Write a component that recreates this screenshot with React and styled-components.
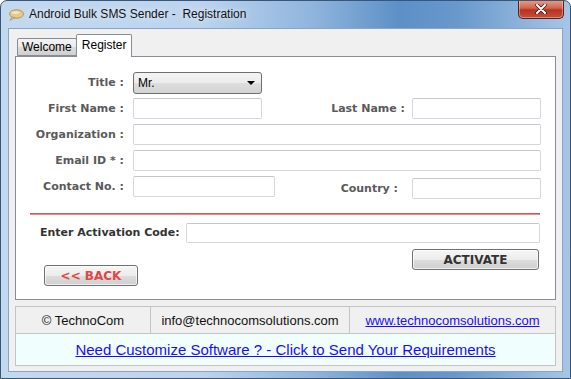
import React from "react";
import styled, { createGlobalStyle } from "styled-components";

const GlobalStyle = createGlobalStyle`
  * { box-sizing: border-box; }
  html, body { margin: 0; padding: 0; background: #ffffff; }
  body { font-family: "Liberation Sans", Arial, sans-serif; }
`;

const Window = styled.div`
  width: 571px;
  height: 379px;
  display: flex;
  flex-direction: column;
  border: 1px solid #3b5577;
  border-radius: 7px 7px 0 0;
  overflow: hidden;
  background: linear-gradient(
    90deg,
    #c3d9f0 0%,
    #bcd4ee 35%,
    #8fb4dd 55%,
    #5d90c7 70%,
    #6898cc 80%,
    #a7c6e6 100%
  );
`;

const TitleBar = styled.div`
  height: 27px;
  flex: 0 0 27px;
  display: flex;
  align-items: flex-start;
  padding-left: 7px;
`;

const TitleIcon = styled.svg`
  margin-top: 7px;
  width: 16px;
  height: 14px;
`;

const TitleText = styled.div`
  margin-top: 6px;
  margin-left: 5px;
  font-family: "Liberation Sans", Arial, sans-serif;
  font-size: 12px;
  color: #111;
  white-space: pre;
  text-shadow: 0 0 6px rgba(255, 255, 255, 0.9);
  flex: 1;
`;

const CloseButton = styled.div`
  width: 46px;
  height: 19px;
  margin-right: 6px;
  margin-top: -1px;
  border: 1px solid #5b1d1d;
  border-top: none;
  border-radius: 0 0 5px 5px;
  background: linear-gradient(180deg, #e8a08a 0%, #d0644f 45%, #b8321e 55%, #c4503a 100%);
  display: flex;
  align-items: center;
  justify-content: center;
  box-shadow: inset 0 0 0 1px rgba(255, 255, 255, 0.35);
`;

const Client = styled.div`
  flex: 1;
  margin: 0 7px 6px 7px;
  border: 1px solid #8aa4c2;
  background: #f0f0f0;
  padding: 6px 6px 0 6px;
  display: flex;
  flex-direction: column;
`;

const TabStrip = styled.div`
  display: flex;
  align-items: flex-end;
  height: 21px;
  padding-left: 2px;
  position: relative;
  z-index: 1;
`;

const Tab = styled.div`
  height: ${p => (p.active ? "23px" : "18px")};
  margin-bottom: ${p => (p.active ? "-1px" : "0")};
  padding: 0 ${p => (p.active ? "5px" : "4px")};
  margin-left: ${p => (p.active ? "-1px" : "0")};
  border: 1px solid #898c95;
  border-bottom: ${p => (p.active ? "none" : "1px solid #898c95")};
  border-radius: 2px 2px 0 0;
  background: ${p =>
    p.active ? "#ffffff" : "linear-gradient(180deg, #f3f3f3 0%, #ebebeb 50%, #dddddd 51%, #cfcfcf 100%)"};
  font-size: 12px;
  color: #000;
  display: flex;
  align-items: ${p => (p.active ? "flex-start" : "center")};
  padding-top: ${p => (p.active ? "3px" : "0")};
`;

const Panel = styled.div`
  height: 244px;
  border: 1px solid #898c95;
  background: #ffffff;
  padding: 15px 15px 0 0;
  display: flex;
  flex-direction: column;
`;

const FormGrid = styled.div`
  display: grid;
  grid-template-columns: 117px 129px 150px 129px;
  grid-auto-rows: 22px;
  row-gap: 4px;
  align-items: start;
`;

const Label = styled.div`
  font-family: "DejaVu Sans", Verdana, sans-serif;
  font-weight: bold;
  font-size: 11px;
  color: #5a5a5a;
  text-align: right;
  padding-right: ${p => p.pr || 9}px;
  margin-top: ${p => (p.drop ? 2 : 0)}px;
  line-height: 22px;
  white-space: nowrap;
`;

const Input = styled.div`
  height: 21px;
  width: ${p => (p.w ? `${p.w}px` : "auto")};
  grid-column: ${p => p.span || "auto"};
  margin-top: ${p => (p.drop ? 2 : 0)}px;
  border: 1px solid #d4d8de;
  border-top-color: #c3c8cf;
  border-radius: 2px;
  background: #ffffff;
`;

const Select = styled.div`
  height: 22px;
  border: 1px solid #6f6f6f;
  border-radius: 3px;
  background: linear-gradient(180deg, #f4f4f4 0%, #ececec 50%, #dedede 51%, #d3d3d3 100%);
  display: flex;
  align-items: center;
  justify-content: space-between;
  padding: 0 6px 0 4px;
  font-family: "Liberation Sans", Arial, sans-serif;
  font-size: 12px;
  color: #000;
`;

const Arrow = styled.span`
  width: 0;
  height: 0;
  border-left: 4px solid transparent;
  border-right: 4px solid transparent;
  border-top: 4px solid #000;
`;

const Divider = styled.div`
  height: 2px;
  margin: 15px 0 0 14px;
  background: linear-gradient(180deg, #c23b3b 0%, #e9b0b0 100%);
`;

const ActivationRow = styled.div`
  display: flex;
  align-items: center;
  margin-top: 8px;
  padding-left: 24px;
  gap: 6px;
`;

const ActivationLabel = styled(Label)`
  color: #333333;
  padding-right: 0;
  line-height: 20px;
`;

const WideInput = styled(Input)`
  flex: 1;
  height: 20px;
`;

const ButtonRow = styled.div`
  display: flex;
  justify-content: space-between;
  align-items: flex-start;
  margin-top: 6px;
  padding-left: 28px;
`;

const Button = styled.div`
  width: ${p => p.w}px;
  height: 21px;
  margin-top: ${p => p.mt || 0}px;
  margin-right: ${p => p.mr || 0}px;
  border: 1px solid #707070;
  border-radius: 3px;
  background: linear-gradient(180deg, #f6f6f6 0%, #ececec 50%, #dddddd 51%, #cfcfcf 100%);
  box-shadow: inset 0 0 0 1px rgba(255, 255, 255, 0.7);
  display: flex;
  align-items: center;
  justify-content: center;
  font-family: "DejaVu Sans", Verdana, sans-serif;
  font-weight: bold;
  font-size: ${p => p.fs || 12}px;
  color: ${p => p.color || "#333"};
`;

const Footer = styled.div`
  margin-top: 6px;
  border: 1px solid #c4c4c4;
  display: grid;
  grid-template-columns: 135px 199px 1fr;
  grid-template-rows: 27px 31px;
`;

const FooterCell = styled.div`
  background: #f0f0f0;
  border-right: ${p => (p.last ? "none" : "1px solid #c4c4c4")};
  border-bottom: 1px solid #c4c4c4;
  display: flex;
  align-items: center;
  justify-content: center;
  font-family: "Liberation Sans", Arial, sans-serif;
  font-size: 13px;
  color: #111;
`;

const FooterBanner = styled.div`
  grid-column: 1 / -1;
  background: #f0fefe;
  display: flex;
  align-items: center;
  justify-content: center;
`;

const LinkText = styled.a`
  color: ${p => p.color || "#1a0dff"};
  text-decoration: underline;
  font-family: "Liberation Sans", Arial, sans-serif;
  font-size: ${p => p.fs || 13}px;
  cursor: pointer;
`;

export default function App() {
  return (
    <>
      <GlobalStyle />
      <Window>
        <TitleBar>
          <TitleIcon viewBox="0 0 16 14">
            <ellipse cx="8.5" cy="6" rx="7" ry="4.2" fill="#e6c98c" stroke="#a88a4c" strokeWidth="0.8" />
            <path d="M4 9 L2 12.5 L7 9.6 Z" fill="#e6c98c" stroke="#a88a4c" strokeWidth="0.6" />
            <ellipse cx="7.5" cy="4.6" rx="4" ry="1.4" fill="#f6e7c4" />
          </TitleIcon>
          <TitleText>{"Android Bulk SMS Sender -  Registration"}</TitleText>
          <CloseButton>
            <svg width="12" height="10" viewBox="0 0 12 10">
              <path d="M2 1 L10 9 M10 1 L2 9" stroke="#3a1010" strokeWidth="3.4" strokeLinecap="round" />
              <path d="M2 1 L10 9 M10 1 L2 9" stroke="#ffffff" strokeWidth="2" strokeLinecap="round" />
            </svg>
          </CloseButton>
        </TitleBar>
        <Client>
          <TabStrip>
            <Tab>Welcome</Tab>
            <Tab active>Register</Tab>
          </TabStrip>
          <Panel>
            <FormGrid>
              <Label>Title :</Label>
              <Select>
                <span>Mr.</span>
                <Arrow />
              </Select>
              <div />
              <div />

              <Label>First Name :</Label>
              <Input />
              <Label pr={7}>Last Name :</Label>
              <Input />

              <Label>Organization :</Label>
              <Input span="2 / 5" />

              <Label>Email ID * :</Label>
              <Input span="2 / 5" />

              <Label>Contact No. :</Label>
              <Input w={142} />
              <Label pr={14} drop>Country :</Label>
              <Input drop />
            </FormGrid>
            <Divider />
            <ActivationRow>
              <ActivationLabel>Enter Activation Code:</ActivationLabel>
              <WideInput />
            </ActivationRow>
            <ButtonRow>
              <Button w={94} mt={16} color="#e04848">{"<< BACK"}</Button>
              <Button w={127} mr={1}>ACTIVATE</Button>
            </ButtonRow>
          </Panel>
          <Footer>
            <FooterCell>© TechnoCom</FooterCell>
            <FooterCell>info@technocomsolutions.com</FooterCell>
            <FooterCell last>
              <LinkText>www.technocomsolutions.com</LinkText>
            </FooterCell>
            <FooterBanner>
              <LinkText fs={15}>Need Customize Software ? - Click to Send Your Requirements</LinkText>
            </FooterBanner>
          </Footer>
        </Client>
      </Window>
    </>
  );
}
